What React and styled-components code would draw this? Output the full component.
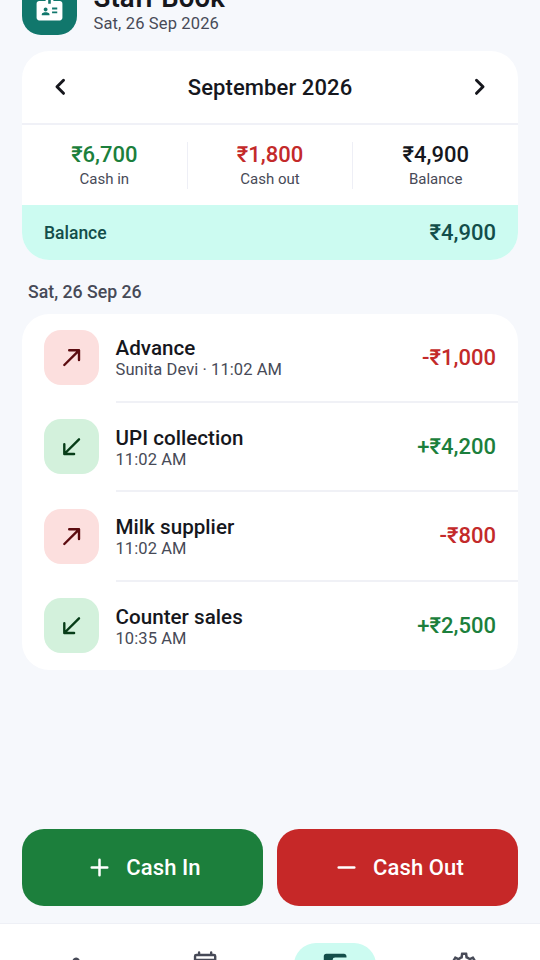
import React from 'react';
import styled, { createGlobalStyle } from 'styled-components';
import { MdBadge, MdAccountBalanceWallet, MdOutlineSettings, MdOutlineGroups } from 'react-icons/md';

const GlobalStyle = createGlobalStyle`
  * {
    box-sizing: border-box;
  }

  body {
    margin: 0;
    background: #f6f8fc;
    color: #16171d;
    font-family: Roboto, "Noto Sans", sans-serif;
  }

  button {
    border: 0;
    padding: 0;
    background: none;
    color: inherit;
    font: inherit;
    cursor: pointer;
  }
`;

const Screen = styled.div`
  display: flex;
  flex-direction: column;
  width: 540px;
  height: 960px;
  overflow: hidden;
`;

const Header = styled.header`
  display: flex;
  flex-shrink: 0;
  align-items: center;
  gap: 16.5px;
  height: 55px;
  margin: -20.5px 22px 16.5px;
`;

const Logo = styled.div`
  display: flex;
  align-items: center;
  justify-content: center;
  width: 55px;
  height: 55px;
  border-radius: 19px;
  background: #11776c;
  color: #fff;
`;

const HeaderText = styled.div`
  padding-top: 2px;
`;

const Title = styled.h1`
  margin: 0;
  font-size: 27.5px;
  font-weight: 600;
  letter-spacing: 0.1px;
  line-height: 32px;
`;

const Subtitle = styled.div`
  color: #474a57;
  font-size: 16.5px;
  letter-spacing: 0.15px;
  line-height: 20px;
`;

const Card = styled.section`
  flex-shrink: 0;
  margin: 0 22px;
  border-radius: 27.5px;
  background: #fff;
  overflow: hidden;
`;

const MonthBar = styled.div`
  display: flex;
  align-items: center;
  justify-content: space-between;
  height: 74px;
  padding: 0 22px 1px;
  border-bottom: 2px solid #f0f1f7;
`;

const MonthButton = styled.button`
  display: flex;
  width: 33px;
  height: 33px;
`;

const Month = styled.div`
  padding-top: 2px;
  font-size: 22px;
  font-weight: 550;
  letter-spacing: 0.1px;
`;

const Stats = styled.div`
  display: flex;
  align-items: center;
  height: 80px;
`;

const Stat = styled.div`
  flex: 1;
  height: 47px;
  border-right: ${({ $last }) => ($last ? '0' : '1px solid #eeeff6')};
  text-align: center;
`;

const tones = {
  in: '#1c7f3c',
  out: '#c32a2a',
  plain: '#16171d',
};

const StatValue = styled.div`
  color: ${({ $tone }) => tones[$tone]};
  font-size: 22px;
  font-weight: 550;
  line-height: 25px;
`;

const StatLabel = styled.div`
  color: #474a57;
  font-size: 15px;
  line-height: 24px;
`;

const BalanceBar = styled.div`
  display: flex;
  align-items: center;
  justify-content: space-between;
  height: 54.5px;
  padding: 0 22px;
  background: #ccfbf1;
  color: #134e4a;
  font-size: 17.5px;
  font-weight: 500;
`;

const BalanceLabel = styled.span`
  padding-top: 1px;
`;

const BalanceValue = styled.span`
  font-size: 22px;
  font-weight: 550;
`;

const DateHeading = styled.h2`
  flex-shrink: 0;
  margin: 21px 28px 11px;
  color: #474a57;
  font-size: 17.7px;
  font-weight: 500;
  line-height: 22px;
`;

const Entry = styled.div`
  display: flex;
  gap: 16.5px;
  padding-left: 22px;
`;

const EntryIcon = styled.div`
  display: flex;
  align-items: center;
  justify-content: center;
  width: 55px;
  height: 55px;
  margin: 16.5px 0;
  border-radius: 17px;
  background: ${({ $tone }) => ($tone === 'in' ? '#d3f1dc' : '#fcdfde')};
  color: ${({ $tone }) => ($tone === 'in' ? '#073d18' : '#5c0c10')};
`;

const EntryBody = styled.div`
  display: flex;
  flex: 1;
  align-items: center;
  justify-content: space-between;
  height: ${({ $last }) => ($last ? '88px' : '89.4px')};
  padding-right: 22px;
  border-bottom: ${({ $last }) => ($last ? '0' : '2px solid #f0f1f6')};
`;

const EntryText = styled.div`
  padding-top: 2px;
`;

const EntryTitle = styled.div`
  font-size: 20.6px;
  font-weight: 550;
  letter-spacing: 0.03px;
  line-height: 24px;
`;

const EntryMeta = styled.div`
  color: #474a57;
  font-size: 16.5px;
  letter-spacing: 0.08px;
  line-height: 20px;
`;

const Amount = styled.div`
  color: ${({ $tone }) => tones[$tone]};
  font-size: 22px;
  font-weight: 550;
`;

const Actions = styled.div`
  display: flex;
  flex-shrink: 0;
  gap: 14px;
  margin: auto 22px 17px;
`;

const ActionButton = styled.button`
  display: flex;
  flex: 1;
  align-items: center;
  justify-content: center;
  gap: 10px;
  height: 77px;
  padding-right: 1px;
  border-radius: 22px;
  background: ${({ $tone }) => ($tone === 'in' ? '#1c7f3c' : '#c62828')};
  color: #fff;
  font-size: 22px;
  font-weight: 550;
  letter-spacing: 0.1px;
`;

const Nav = styled.nav`
  display: flex;
  flex-shrink: 0;
  height: 37px;
  padding: 19px 11px 0;
  border-top: 1px solid #eef0f6;
  background: #fff;
  overflow: hidden;
`;

const NavItem = styled.div`
  display: flex;
  flex: 1;
  justify-content: center;
`;

const NavPill = styled.div`
  display: flex;
  flex-shrink: 0;
  align-items: center;
  justify-content: center;
  width: 82.5px;
  height: 44px;
  border-radius: 22px;
  background: ${({ $active }) => ($active ? '#ccfbf1' : 'transparent')};
  color: ${({ $active }) => ($active ? '#134e4a' : '#474a57')};
`;

const LineIcon = ({ d, width = 2, size = 33, box = 33 }) => (
  <svg
    width={size}
    height={size}
    viewBox={`0 0 ${box} ${box}`}
    fill="none"
    stroke="currentColor"
    strokeWidth={width}
    strokeLinecap="round"
    strokeLinejoin="round"
  >
    <path d={d} />
  </svg>
);

const icons = {
  left: 'M19.5 10.3 13 16.8l6.5 6.5',
  right: 'M13.5 10.3 20 16.8l-6.5 6.5',
  out: 'M9.3 24 24 9.3M14.2 9.3H24v9.8',
  in: 'M24 9.3 9.3 24M9.3 14.2V24h9.8',
  plus: 'M8.7 16.5h15.6M16.5 8.7v15.6',
  minus: 'M8.7 16.5h15.6',
  calendar: 'M5 4h14a1 1 0 0 1 1 1v15a1 1 0 0 1-1 1H5a1 1 0 0 1-1-1V5a1 1 0 0 1 1-1zM4 7.8h16M7.2 2v2M16.8 2v2',
};

const CalendarIcon = ({ size }) => <LineIcon d={icons.calendar} size={size} box={24} width={1.9} />;

const stats = [
  { label: 'Cash in', value: '₹6,700', tone: 'in' },
  { label: 'Cash out', value: '₹1,800', tone: 'out' },
  { label: 'Balance', value: '₹4,900', tone: 'plain' },
];

const entries = [
  { title: 'Advance', meta: 'Sunita Devi · 11:02 AM', amount: '-₹1,000', tone: 'out' },
  { title: 'UPI collection', meta: '11:02 AM', amount: '+₹4,200', tone: 'in' },
  { title: 'Milk supplier', meta: '11:02 AM', amount: '-₹800', tone: 'out' },
  { title: 'Counter sales', meta: '10:35 AM', amount: '+₹2,500', tone: 'in' },
];

const navIcons = [MdOutlineGroups, CalendarIcon, MdAccountBalanceWallet, MdOutlineSettings];

const App = () => (
  <>
    <GlobalStyle />
    <Screen>
      <Header>
        <Logo><MdBadge size={31} /></Logo>
        <HeaderText>
          <Title>Staff Book</Title>
          <Subtitle>Sat, 26 Sep 2026</Subtitle>
        </HeaderText>
      </Header>
      <Card>
        <MonthBar>
          <MonthButton aria-label="Previous month"><LineIcon d={icons.left} width={3} /></MonthButton>
          <Month>September 2026</Month>
          <MonthButton aria-label="Next month"><LineIcon d={icons.right} width={3} /></MonthButton>
        </MonthBar>
        <Stats>
          {stats.map(({ label, value, tone }, i) => (
            <Stat key={label} $last={i === stats.length - 1}>
              <StatValue $tone={tone}>{value}</StatValue>
              <StatLabel>{label}</StatLabel>
            </Stat>
          ))}
        </Stats>
        <BalanceBar>
          <BalanceLabel>Balance</BalanceLabel>
          <BalanceValue>₹4,900</BalanceValue>
        </BalanceBar>
      </Card>
      <DateHeading>Sat, 26 Sep 26</DateHeading>
      <Card>
        {entries.map(({ title, meta, amount, tone }, i) => (
          <Entry key={title}>
            <EntryIcon $tone={tone}><LineIcon d={icons[tone]} width={2.4} /></EntryIcon>
            <EntryBody $last={i === entries.length - 1}>
              <EntryText>
                <EntryTitle>{title}</EntryTitle>
                <EntryMeta>{meta}</EntryMeta>
              </EntryText>
              <Amount $tone={tone}>{amount}</Amount>
            </EntryBody>
          </Entry>
        ))}
      </Card>
      <Actions>
        <ActionButton $tone="in">
          <LineIcon d={icons.plus} width={2.5} />
          Cash In
        </ActionButton>
        <ActionButton $tone="out">
          <LineIcon d={icons.minus} width={2.5} />
          Cash Out
        </ActionButton>
      </Actions>
      <Nav>
        {navIcons.map((Icon, i) => (
          <NavItem key={i}>
            <NavPill $active={i === 2}><Icon size={30.25} /></NavPill>
          </NavItem>
        ))}
      </Nav>
    </Screen>
  </>
);

export default App;
